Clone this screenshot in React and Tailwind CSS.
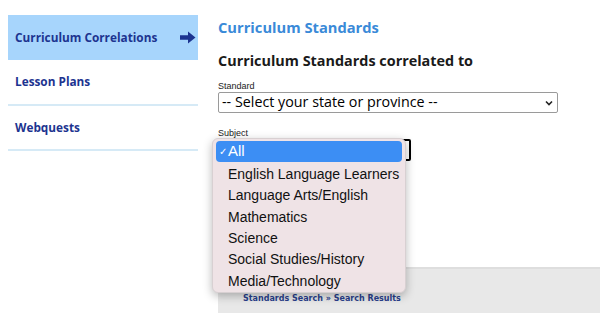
const subjects = [
	"English Language Learners",
	"Language Arts/English",
	"Mathematics",
	"Science",
	"Social Studies/History",
	"Media/Technology",
];

function Arrow() {
	return (
		<svg width="16" height="13" viewBox="0 0 16 13" className="text-[#1d3490]">
			<path d="M0 4.2 H8 V0.5 L15.5 6.5 L8 12.5 V8.8 H0 Z" fill="currentColor" />
		</svg>
	);
}

export default function App() {
	return (
		<div className="w-[600px] h-[313px] overflow-hidden bg-white flex font-['Open_Sans',sans-serif]">
			{/* Sidebar */}
			<div className="ml-2 mt-[15px] w-[190px] flex flex-col">
				<div className="h-[45px] bg-[#a7d5fc] flex items-center justify-between pl-[7px] pr-[2px]">
					<span className="text-[11.8px] font-bold text-[#1d3490] whitespace-nowrap">
						Curriculum Correlations
					</span>
					<Arrow />
				</div>
				<div className="h-[46px] border-b-2 border-[#d6eaf6] flex items-center pl-[7px]">
					<span className="text-[11.8px] font-bold text-[#1d3490]">Lesson Plans</span>
				</div>
				<div className="h-[45px] border-b-2 border-[#d6eaf6] flex items-center pl-[7px]">
					<span className="text-[11.8px] font-bold text-[#1d3490]">Webquests</span>
				</div>
			</div>

			{/* Main */}
			<div className="ml-5 flex-1 flex flex-col">
				<h1 className="mt-[16px] text-[14.7px] leading-[22px] font-bold text-[#3a8ad8] whitespace-nowrap">
					Curriculum Standards
				</h1>
				<h2 className="mt-[13px] text-[14.4px] leading-[20px] font-bold text-[#1a1a1a] whitespace-nowrap">
					Curriculum Standards correlated to
				</h2>
				<label className="mt-[9px] text-[9px] leading-[12px] text-[#222] font-['Liberation_Sans',sans-serif]">
					Standard
				</label>
				<div className="w-[340px] h-[21px] border border-[#9a9a9a] rounded-[2px] flex items-center justify-between pl-[3px] pr-[4px]">
					<span className="text-[14.3px] leading-none text-black whitespace-nowrap">
						-- Select your state or province --
					</span>
					<svg width="8" height="6" viewBox="0 0 8 6">
						<path d="M1 1.5 L4 4.5 L7 1.5" stroke="#222" strokeWidth="1.6" fill="none" />
					</svg>
				</div>
				<label className="mt-[14px] text-[9px] leading-[12px] text-[#222] font-['Liberation_Sans',sans-serif]">
					Subject
				</label>
				<div className="relative">
					<div className="w-[193px] h-[22px] border-2 border-black rounded-[2px]" />
					{/* Open dropdown list */}
					<div className="absolute left-[-6px] top-[-1px] w-[194px] h-[155px] rounded-[6px] bg-[#efe3e6] shadow-[0_3px_10px_rgba(0,0,0,0.28)] border border-[#d8d0d2] pt-[2px] px-[3px] font-['Liberation_Sans',sans-serif]">
						<div className="h-[21px] rounded-[4px] bg-[#3c8ef4] flex items-center text-white text-[15px]">
							<span className="w-[12px] text-[10px] pl-[3px]">✓</span>
							<span>All</span>
						</div>
						<div className="pt-[2px]">
							{subjects.map((s) => (
								<div key={s} className="h-[21.3px] flex items-center pl-[12px] text-[14px] text-[#111] whitespace-nowrap">
									{s}
								</div>
							))}
						</div>
					</div>
				</div>
				<div className="mt-[106px] flex-1 bg-[#e8e8e8] border-t-2 border-[#dedede] pl-[25px] pt-[25px]">
					<span className="block text-[8px] leading-[10px] font-bold text-[#2a3f8c] font-['DejaVu_Sans',sans-serif] whitespace-nowrap">
						Standards Search » Search Results
					</span>
				</div>
			</div>
		</div>
	);
}
